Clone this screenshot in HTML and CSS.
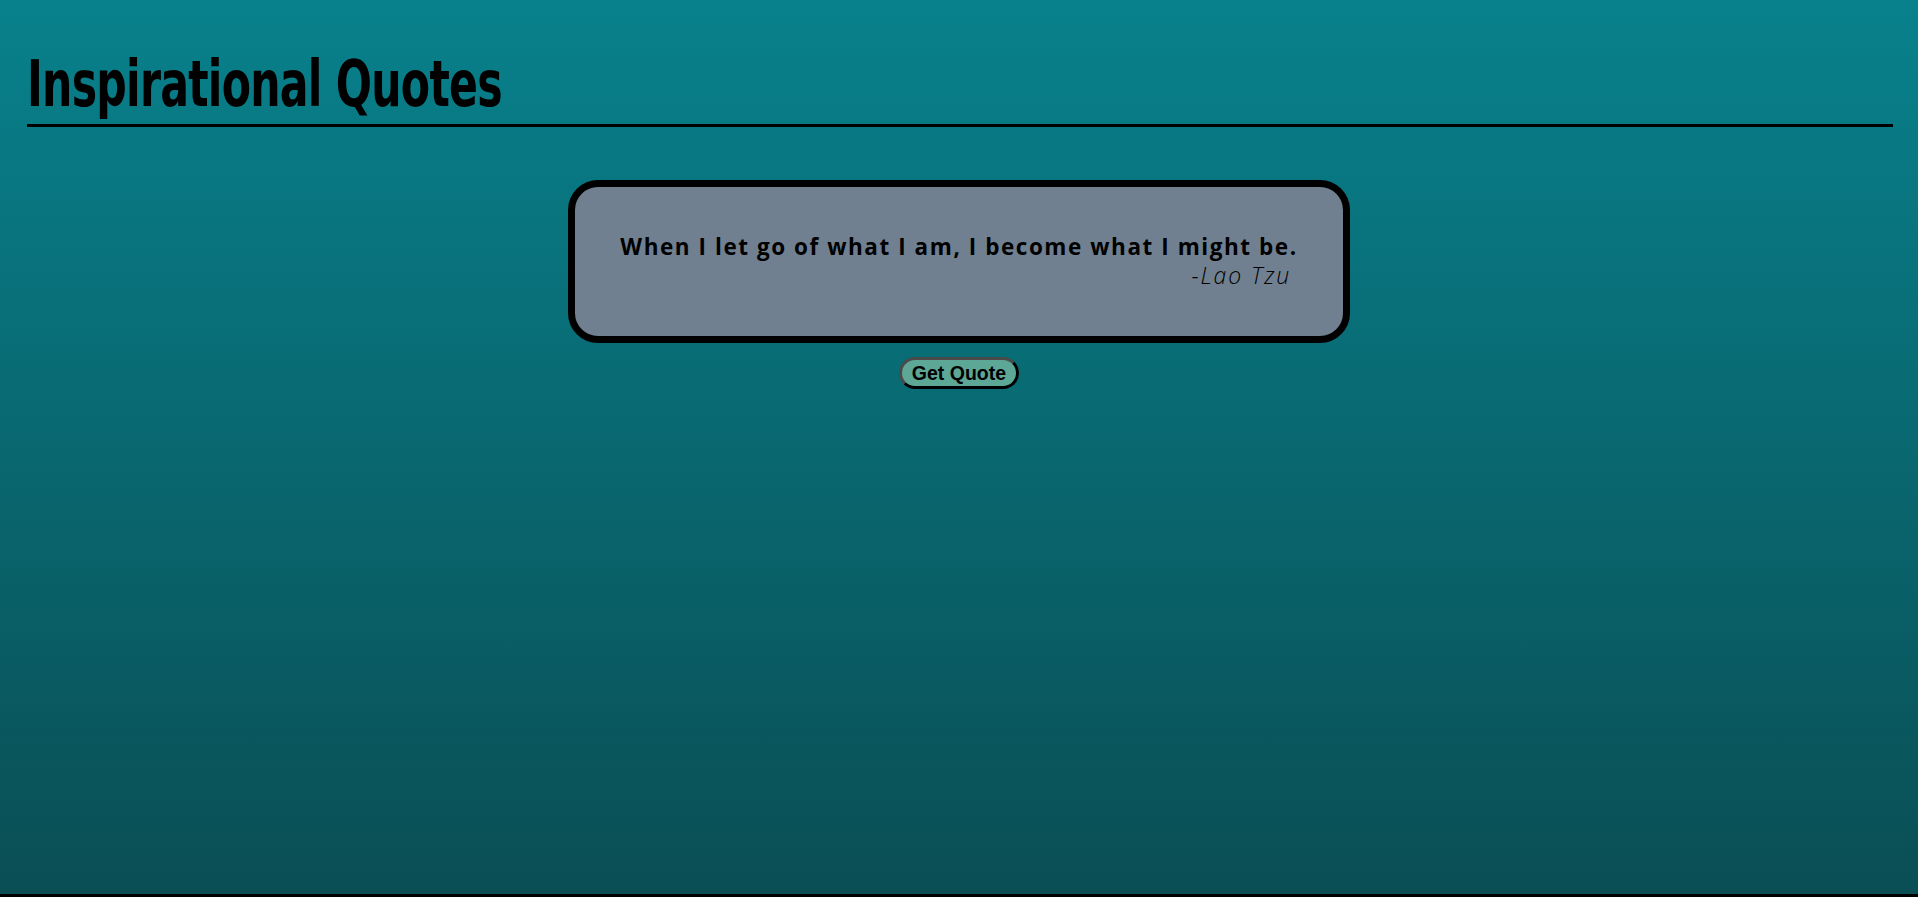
FILE: index.html
```html
<!DOCTYPE html>
<html lang="en">
<head>
<meta charset="utf-8">
<title>Inspirational Quotes</title>
<link rel="stylesheet" href="styles.css">
</head>
<body>
<header class="site-header">
  <h1 class="site-title"><span class="site-title-text">Inspirational Quotes</span></h1>
</header>
<main class="main">
  <section class="quote-card">
    <p class="quote-text">When I let go of what I am, I become what I might be.</p>
    <p class="quote-author">-Lao Tzu</p>
  </section>
  <button class="quote-button" type="button">Get Quote</button>
</main>
</body>
</html>
```

FILE: styles.css
```css
html {
  height: 100%;
}

body {
  margin: 0;
  min-height: 100vh;
  box-sizing: border-box;
  border-bottom: 3px solid #000;
  background: linear-gradient(to bottom, #08818c 0%, #0a4e54 100%);
  font-family: "Open Sans", "Liberation Sans", sans-serif;
  color: #000;
}

.site-header {
  padding: 0 25px 0 27px;
}

.site-title {
  margin: 0;
  padding-top: 44px;
  border-bottom: 3px solid #000;
  font-family: "Liberation Sans Narrow", "DejaVu Sans Condensed", "Liberation Sans", sans-serif;
  font-weight: 700;
  font-size: 64px;
  line-height: 80px;
  letter-spacing: -1px;
}

.site-title-text {
  display: inline-block;
  transform: scaleX(0.74);
  transform-origin: left center;
}

.main {
  display: flex;
  flex-direction: column;
  align-items: center;
  padding-top: 53px;
}

.quote-card {
  width: 782px;
  box-sizing: border-box;
  border: 7px solid #000;
  border-radius: 30px;
  background: #708090;
  padding: 46px 28px 48px;
}

.quote-text {
  margin: 0;
  text-align: center;
  font-weight: 700;
  font-size: 22.5px;
  line-height: 28px;
  letter-spacing: 1.55px;
}

.quote-author {
  margin: 1px 0 0;
  padding-right: 24px;
  text-align: right;
  font-style: italic;
  font-weight: 300;
  font-size: 23px;
  line-height: 26px;
  letter-spacing: 1.9px;
}

.quote-button {
  margin-top: 14px;
  padding: 3px 10px;
  border: 3px solid;
  border-color: #4a4a4a #000 #000 #4a4a4a;
  border-radius: 16px;
  background: #5da796;
  font-family: "Liberation Sans", Arial, sans-serif;
  font-weight: 700;
  font-size: 19.5px;
  line-height: 20px;
  color: #000;
}
```
